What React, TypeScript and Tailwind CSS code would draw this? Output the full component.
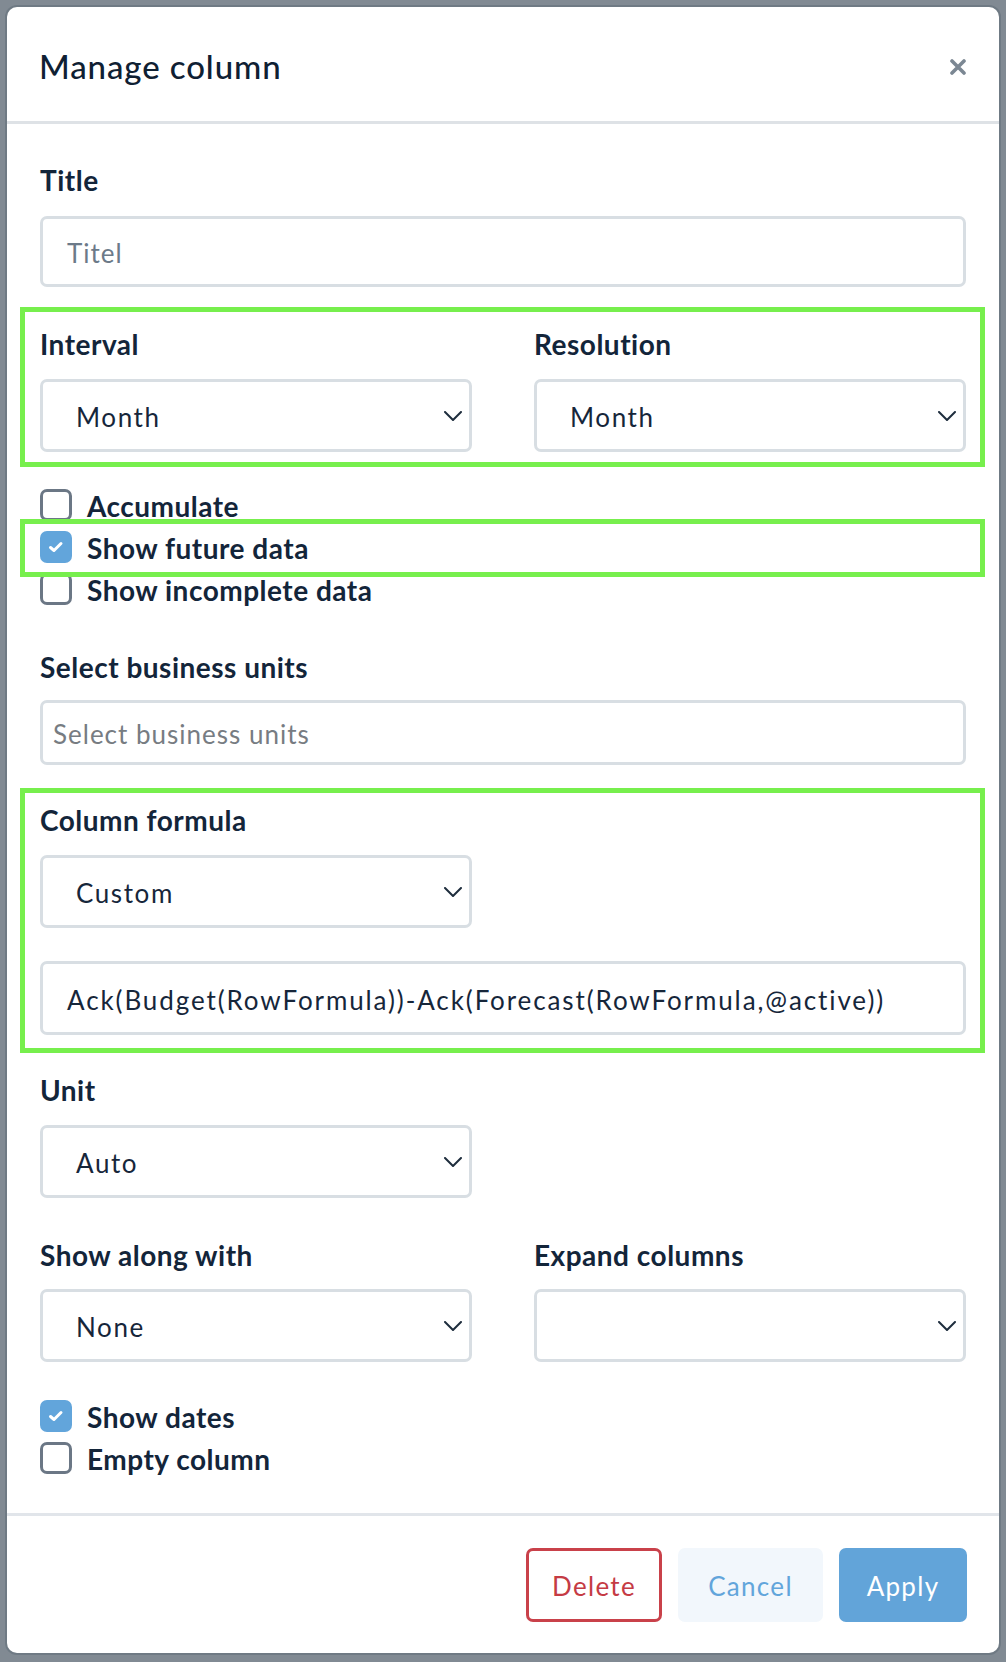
import type { ReactNode } from "react";

const font = { fontFamily: "Lato, 'Noto Sans', sans-serif" };

function Chevron() {
	return (
		<svg width="18" height="10" viewBox="0 0 18 10" fill="none" aria-hidden="true">
			<polyline
				points="1,1 9,9 17,1"
				stroke="#1e2d3d"
				strokeWidth="2"
				strokeLinecap="round"
				strokeLinejoin="round"
			/>
		</svg>
	);
}

function Label({ children }: { children: ReactNode }) {
	return (
		<div className="text-[28px] leading-[32px] font-bold tracking-[0.5px] text-[#13253a]">
			{children}
		</div>
	);
}

function Select({ value, wide }: { value?: string; wide?: boolean }) {
	return (
		<div
			className={`flex h-[73px] items-center justify-between rounded-[7px] border-[3px] border-[#d8dee3] bg-white pl-[33px] pr-[7px] ${
				wide ? "w-full" : "w-[432px]"
			}`}
		>
			<span className="pt-[4px] text-[26px] tracking-[1.6px] text-[#16263a]">{value}</span>
			<Chevron />
		</div>
	);
}

function Check({ checked, label }: { checked?: boolean; label: string }) {
	return (
		<div className="flex h-[42px] items-center gap-[15px]">
			{checked ? (
				<div className="flex h-[32px] w-[32px] items-center justify-center rounded-[7px] bg-[#62a5db]">
					<svg width="16" height="12" viewBox="0 0 16 12" fill="none" aria-hidden="true">
						<polyline
							points="2.5,6.5 6,9.5 13,2.5"
							stroke="white"
							strokeWidth="3"
							strokeLinecap="round"
							strokeLinejoin="round"
						/>
					</svg>
				</div>
			) : (
				<div className="h-[32px] w-[32px] rounded-[7px] border-[3px] border-[#6b7785] bg-white" />
			)}
			<span className="pt-[2px] text-[28px] font-bold tracking-[0.5px] text-[#13253a]">
				{label}
			</span>
		</div>
	);
}

export default function App() {
	return (
		<div className="min-h-[1662px] bg-[#818a93] pl-[7px] pt-[7px]" style={font}>
			<div className="flex h-[1646px] w-[992px] flex-col rounded-[10px] bg-white ring-2 ring-[#6f7a84]">
				<header className="flex h-[117px] items-center justify-between border-b-[3px] border-[#dee2e6] pl-[32px] pr-[33px] pt-[6px]">
					<h1 className="text-[33px] font-medium tracking-[0.9px] text-[#0f2033]">
						Manage column
					</h1>
					<svg width="16" height="16" viewBox="0 0 16 16" aria-hidden="true">
						<path
							d="M2 2 L14 14 M14 2 L2 14"
							stroke="#7b8793"
							strokeWidth="3.6"
							strokeLinecap="round"
						/>
					</svg>
				</header>

				<div className="flex-1 pl-[33px] pr-[33px] pt-[40px]">
					<Label>Title</Label>
					<div className="mt-[20px] flex h-[71px] items-center rounded-[7px] border-[3px] border-[#d8dee3] pl-[24px]">
						<span className="pt-[4px] text-[26px] tracking-[1px] text-[#6c7a89]">Titel</span>
					</div>

					<div className="-ml-[20px] -mr-[19px] mt-[20px] border-[5px] border-[#77ef4d] pb-[10px] pl-[15px] pr-[14px] pt-[16px]">
						<div className="grid grid-cols-2 gap-x-[62px]">
							<div>
								<Label>Interval</Label>
								<div className="mt-[19px]">
									<Select value="Month" wide />
								</div>
							</div>
							<div>
								<Label>Resolution</Label>
								<div className="mt-[19px]">
									<Select value="Month" wide />
								</div>
							</div>
						</div>
					</div>

					<div className="mt-[17px]">
						<Check label="Accumulate" />
						<div className="relative">
							<Check checked label="Show future data" />
							<div className="pointer-events-none absolute -bottom-[9px] -left-[20px] -right-[19px] -top-[7px] border-[5px] border-[#77ef4d]" />
						</div>
						<Check label="Show incomplete data" />
					</div>

					<div className="mt-[41px]">
						<Label>Select business units</Label>
					</div>
					<div className="mt-[17px] flex h-[65px] items-center rounded-[7px] border-[3px] border-[#d8dee3] pl-[10px]">
						<span className="pt-[4px] text-[26px] tracking-[1px] text-[#777c82]">
							Select business units
						</span>
					</div>

					<div className="-ml-[20px] -mr-[19px] mt-[23px] border-[5px] border-[#77ef4d] pb-[13px] pl-[15px] pr-[14px] pt-[11px]">
						<Label>Column formula</Label>
						<div className="mt-[19px]">
							<Select value="Custom" />
						</div>
						<div className="mt-[33px] flex h-[74px] items-center rounded-[7px] border-[3px] border-[#d8dee3] pl-[24px]">
							<span className="pt-[4px] text-[26px] tracking-[1.9px] text-[#16263a]">
								Ack(Budget(RowFormula))-Ack(Forecast(RowFormula,@active))
							</span>
						</div>
					</div>

					<div className="mt-[21px]">
						<Label>Unit</Label>
					</div>
					<div className="mt-[19px]">
						<Select value="Auto" />
					</div>

					<div className="mt-[41px] grid grid-cols-2 gap-x-[62px]">
						<div>
							<Label>Show along with</Label>
							<div className="mt-[18px]">
								<Select value="None" wide />
							</div>
						</div>
						<div>
							<Label>Expand columns</Label>
							<div className="mt-[18px]">
								<Select wide />
							</div>
						</div>
					</div>

					<div className="mt-[33px] pb-[32px]">
						<Check checked label="Show dates" />
						<Check label="Empty column" />
					</div>
				</div>

				<footer className="flex justify-end gap-[16px] border-t-[3px] border-[#e1e5ea] pb-[31px] pr-[32px] pt-[32px]">
					<button className="h-[74px] w-[136px] rounded-[7px] border-[3px] border-[#c9414a] pt-[3px] text-[26px] tracking-[1.3px] text-[#c53b44]">
						Delete
					</button>
					<button className="h-[74px] w-[145px] rounded-[7px] bg-[#f2f7fc] pt-[3px] text-[26px] tracking-[1.3px] text-[#62a5db]">
						Cancel
					</button>
					<button className="h-[74px] w-[128px] rounded-[7px] bg-[#62a4d9] pt-[3px] text-[26px] tracking-[1.3px] text-white">
						Apply
					</button>
				</footer>
			</div>
		</div>
	);
}
